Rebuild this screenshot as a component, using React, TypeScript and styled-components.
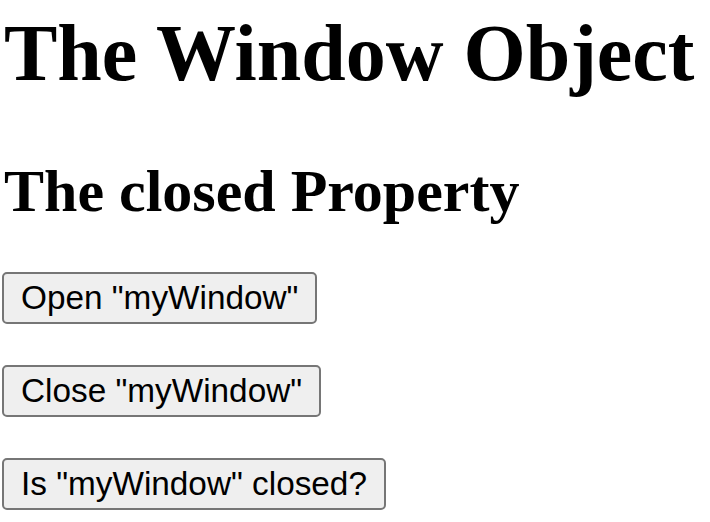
import { FC } from 'react';
import styled, { createGlobalStyle } from 'styled-components';

const GlobalStyle = createGlobalStyle`
  html, body {
    margin: 0;
    padding: 0;
    background: #ffffff;
    color: #000000;
    font-family: "Liberation Serif", "Times New Roman", serif;
  }
`;

const Page = styled.main`
  padding: 9px 2px 0 2px;
`;

const Title = styled.h1`
  font-size: 80px;
  font-weight: 700;
  line-height: 88px;
  margin: 0 0 0 2px;
`;

const Subtitle = styled.h2`
  font-size: 60px;
  font-weight: 700;
  line-height: 66px;
  margin: 61px 0 0 2px;
`;

const ButtonStack = styled.div`
  display: flex;
  flex-direction: column;
  align-items: flex-start;
  gap: 41px;
  margin-top: 48px;
`;

const ActionButton = styled.button`
  font-family: "Liberation Sans", Arial, sans-serif;
  font-size: 33.33px;
  line-height: 38px;
  color: #000000;
  background: #efefef;
  border: 2px solid #767676;
  border-radius: 5px;
  padding: 5px 17px;
  cursor: pointer;
`;

const actions = ['Open "myWindow"', 'Close "myWindow"', 'Is "myWindow" closed?'];

const App: FC = () => {
  return (
    <>
      <GlobalStyle />
      <Page>
        <Title>The Window Object</Title>
        <Subtitle>The closed Property</Subtitle>
        <ButtonStack>
          {actions.map(label => (
            <ActionButton key={label} type="button">{label}</ActionButton>
          ))}
        </ButtonStack>
      </Page>
    </>
  );
};

export default App;
